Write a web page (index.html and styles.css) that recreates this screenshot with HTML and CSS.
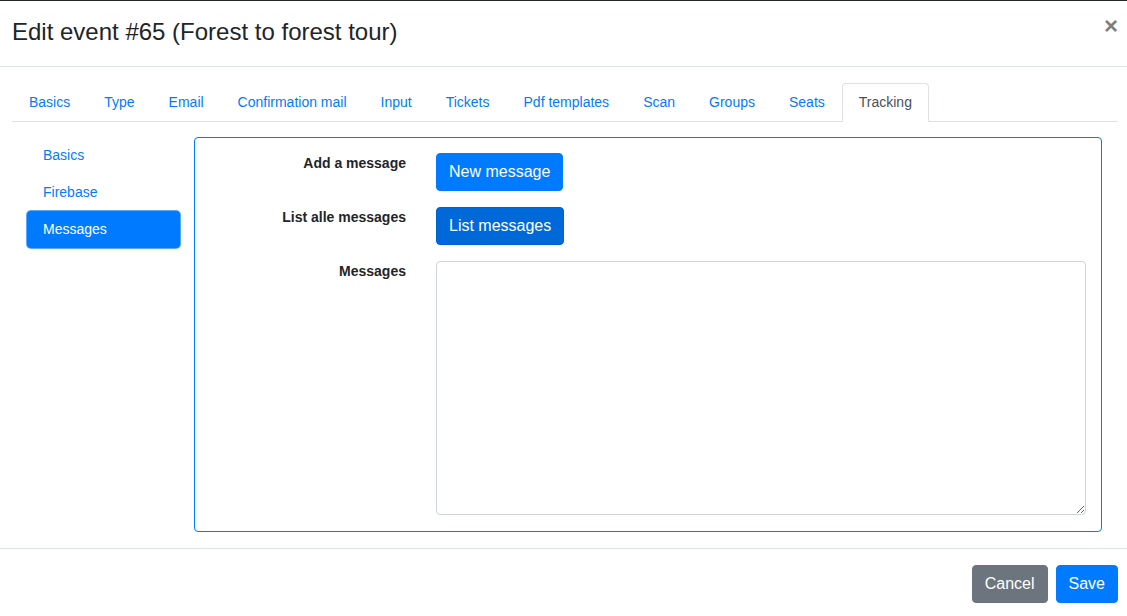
FILE: index.html
```html
<!DOCTYPE html>
<html lang="en">
<head>
<meta charset="utf-8">
<title>Edit event #65</title>
<link rel="stylesheet" href="styles.css">
</head>
<body>
<div class="modal">
  <div class="modal-header">
    <h4 class="modal-title">Edit event #65 (Forest to forest tour)</h4>
    <button class="close" type="button">&times;</button>
  </div>
  <div class="modal-body">
    <ul class="tabs">
      <li><a class="tab">Basics</a></li>
      <li><a class="tab">Type</a></li>
      <li><a class="tab">Email</a></li>
      <li><a class="tab">Confirmation mail</a></li>
      <li><a class="tab">Input</a></li>
      <li><a class="tab">Tickets</a></li>
      <li><a class="tab">Pdf templates</a></li>
      <li><a class="tab">Scan</a></li>
      <li><a class="tab">Groups</a></li>
      <li><a class="tab">Seats</a></li>
      <li><a class="tab active">Tracking</a></li>
    </ul>
    <div class="pane">
      <ul class="pills">
        <li><a class="pill">Basics</a></li>
        <li><a class="pill">Firebase</a></li>
        <li><a class="pill active">Messages</a></li>
      </ul>
      <div class="panel">
        <div class="form-row">
          <label class="label">Add a message</label>
          <div class="field"><button class="btn btn-primary" type="button">New message</button></div>
        </div>
        <div class="form-row">
          <label class="label">List alle messages</label>
          <div class="field"><button class="btn btn-primary focus" type="button">List messages</button></div>
        </div>
        <div class="form-row last">
          <label class="label">Messages</label>
          <div class="field"><textarea class="textarea"></textarea></div>
        </div>
      </div>
    </div>
  </div>
  <div class="modal-footer">
    <button class="btn btn-secondary" type="button">Cancel</button>
    <button class="btn btn-primary" type="button">Save</button>
  </div>
</div>
</body>
</html>
```
FILE: styles.css
```css
* { box-sizing: border-box; }
html, body { margin: 0; padding: 0; }
body {
  font-family: "Liberation Sans", Arial, sans-serif;
  font-size: 16px;
  line-height: 1.5;
  color: #212529;
  background: #fff;
}
.modal {
  border-top: 1px solid #212529;
  width: 1127px;
  height: 616px;
  overflow: hidden;
}
.modal-header {
  display: flex;
  align-items: flex-start;
  justify-content: space-between;
  padding: 17px 9px 20px 12px;
  border-bottom: 1px solid #dee2e6;
}
.modal-title {
  margin: 0;
  font-size: 24px;
  font-weight: 400;
  line-height: 28px;
}
.close {
  border: 0;
  background: none;
  padding: 0;
  margin: 0;
  font-family: "Liberation Sans", Arial, sans-serif;
  font-size: 24px;
  font-weight: 700;
  line-height: 16px;
  color: #000;
  opacity: .5;
  cursor: pointer;
}
.modal-body {
  padding: 16px 9px 16px 12px;
}
.tabs {
  list-style: none;
  margin: 0;
  padding: 0;
  display: flex;
  border-bottom: 1px solid #dee2e6;
}
.tabs li { margin-bottom: -1px; }
.tab {
  display: block;
  padding: 8px 16px;
  font-size: 14px;
  line-height: 21px;
  color: #007bff;
  border: 1px solid transparent;
  border-top-left-radius: 4px;
  border-top-right-radius: 4px;
}
.tab.active {
  color: #495057;
  background: #fff;
  border-color: #dee2e6 #dee2e6 #fff;
}
.pane {
  display: flex;
  gap: 14px;
  padding: 15px 16px 0 15px;
}
.pills {
  list-style: none;
  margin: 0;
  padding: 0;
  width: 153px;
  flex: none;
}
.pill {
  display: block;
  padding: 8px 16px;
  font-size: 14px;
  line-height: 21px;
  color: #007bff;
  border-radius: 4px;
}
.pill.active {
  color: #fff;
  background: #007bff;
  box-shadow: 0 0 0 1px #5aa9ff;
}
.panel {
  flex: 1;
  border: 1px solid #007bff;
  border-radius: 4px;
  padding: 15px 15px 16px 16px;
}
.form-row {
  display: flex;
  gap: 30px;
  margin-bottom: 16px;
}
.form-row.last { margin-bottom: 0; }
.label {
  width: 195px;
  flex: none;
  text-align: right;
  font-size: 14px;
  font-weight: 700;
  line-height: 21px;
}
.field { flex: 1; }
.btn {
  display: inline-block;
  font-family: "Liberation Sans", Arial, sans-serif;
  font-size: 16px;
  line-height: 24px;
  padding: 6px 12px;
  border: 1px solid transparent;
  border-radius: 4px;
  color: #fff;
  cursor: pointer;
}
.btn-primary { background: #007bff; border-color: #007bff; }
.btn-primary.focus { background: #0069d9; border-color: #0062cc; }
.btn-secondary { background: #6c757d; border-color: #6c757d; }
.textarea {
  display: block;
  width: 100%;
  height: 254px;
  border: 1px solid #ced4da;
  border-radius: 4px;
  padding: 6px 12px;
  font-family: "Liberation Sans", Arial, sans-serif;
  font-size: 16px;
  resize: vertical;
}
.modal-footer {
  display: flex;
  justify-content: flex-end;
  gap: 8px;
  padding: 16px 9px 12px 12px;
  border-top: 1px solid #dee2e6;
}
```
